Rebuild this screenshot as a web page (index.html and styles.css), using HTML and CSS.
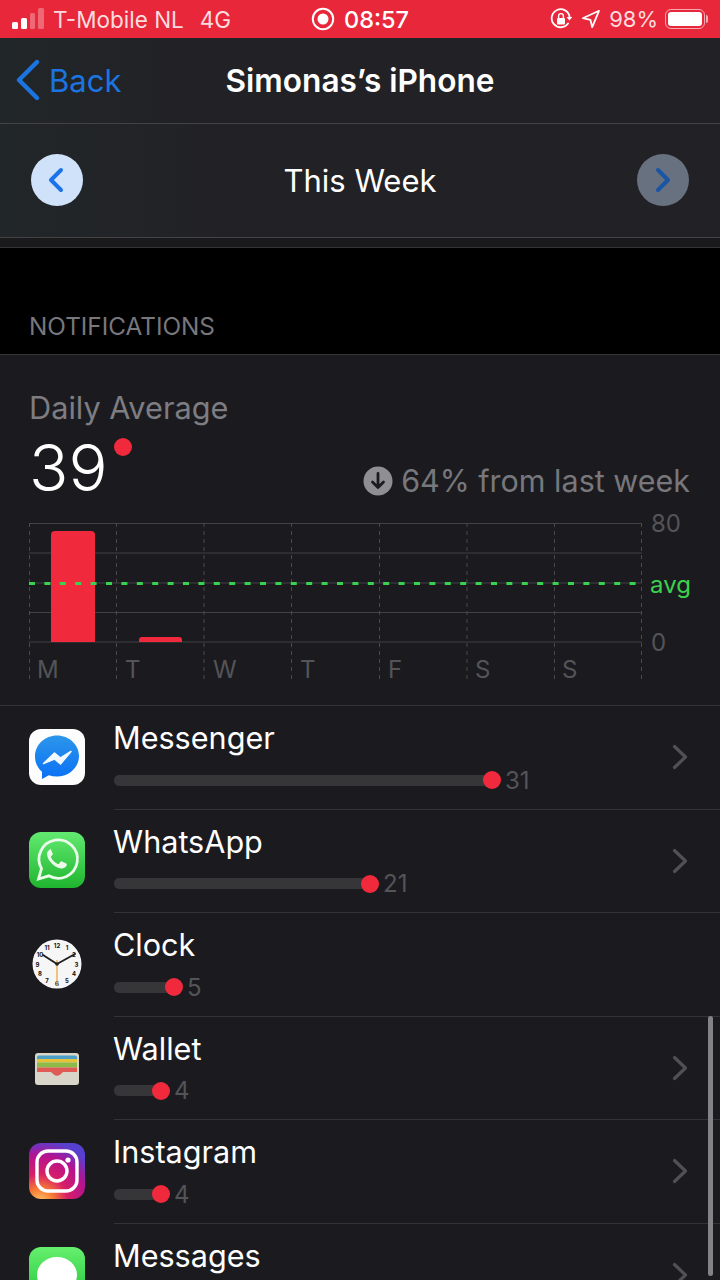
FILE: index.html
```html
<!DOCTYPE html>
<html lang="en">
<head>
<meta charset="UTF-8">
<title>Simonas's iPhone - Notifications</title>
<link rel="stylesheet" href="styles.css">
</head>
<body>
<div class="phone">
  <!-- status bar -->
  <div class="status">
    <div class="status-side">
      <svg class="signal" width="34" height="22" viewBox="0 0 34 22">
        <rect x="0" y="14" width="6" height="7" rx="1.5" fill="#fff"/>
        <rect x="9" y="10" width="6" height="11" rx="1.5" fill="#fff"/>
        <rect x="18" y="5" width="5" height="16" rx="1.5" fill="#fff" opacity=".3"/>
        <rect x="26" y="0" width="6" height="21" rx="1.5" fill="#fff" opacity=".3"/>
      </svg>
      <span class="carrier">T-Mobile NL</span>
      <span class="net">4G</span>
    </div>
    <div class="status-mid">
      <svg width="24" height="24" viewBox="0 0 24 24">
        <circle cx="12" cy="12" r="10.2" fill="none" stroke="#fff" stroke-width="2"/>
        <circle cx="12" cy="12" r="5.5" fill="#fff"/>
      </svg>
      <span class="clock-text">08:57</span>
    </div>
    <div class="status-side right">
      <svg width="22" height="22" viewBox="0 0 22 22">
        <path d="M18 15.5A9 9 0 1 1 19.6 9" fill="none" stroke="#fff" stroke-width="1.8" stroke-linecap="round"/>
        <path d="M16.6 9h5.6l-2.8 3.4z" fill="#fff"/>
        <rect x="7" y="10" width="8" height="6.5" rx="1" fill="#fff"/>
        <path d="M8.6 10V8a2.4 2.4 0 0 1 4.8 0v2" fill="none" stroke="#fff" stroke-width="1.4"/>
      </svg>
      <svg class="arrow" width="20" height="20" viewBox="0 0 20 20">
        <path d="M18 1.8 1.8 9.2l7.6 1.6 1.8 7.4z" fill="none" stroke="#fff" stroke-width="1.8" stroke-linejoin="round"/>
      </svg>
      <span class="batt-text">98%</span>
      <div class="battery"><div class="battery-fill"></div></div>
    </div>
  </div>

  <!-- nav -->
  <div class="nav">
    <div class="back">
      <svg width="26" height="42" viewBox="0 0 26 42">
        <path d="M22 3 4 21l18 18" fill="none" stroke="#1c74e0" stroke-width="4.4" stroke-linecap="round" stroke-linejoin="round"/>
      </svg>
      <span>Back</span>
    </div>
    <h1>Simonas’s iPhone</h1>
  </div>

  <!-- week picker -->
  <div class="week">
    <div class="round-btn prev">
      <svg width="18" height="26" viewBox="0 0 18 26"><path d="M13 3 3 13l10 10" fill="none" stroke="#1a73e8" stroke-width="4" stroke-linecap="round" stroke-linejoin="round"/></svg>
    </div>
    <div class="week-title">This Week</div>
    <div class="round-btn next">
      <svg width="18" height="26" viewBox="0 0 18 26"><path d="m4 3 10 10L4 23" fill="none" stroke="#1a54a5" stroke-width="4" stroke-linecap="round" stroke-linejoin="round"/></svg>
    </div>
  </div>
  <div class="strip"></div>

  <div class="section-label">NOTIFICATIONS</div>

  <!-- summary -->
  <div class="card">
    <div class="daily-label">Daily Average</div>
    <div class="daily-row">
      <div class="daily-num">39<span class="daily-dot"></span></div>
      <div class="change">
        <svg width="30" height="30" viewBox="0 0 30 30">
          <circle cx="15" cy="15" r="14.5" fill="#8e8e93"/>
          <path d="M15 7.5v14M9.5 16l5.500 5.500 5.500-5.500" fill="none" stroke="#1c1c1f" stroke-width="2.800" stroke-linecap="round" stroke-linejoin="round"/>
        </svg>
        <span>64% from last week</span>
      </div>
    </div>

    <!-- chart: lines, bars and labels sit at data positions -->
    <svg class="chart" width="720" height="190" viewBox="0 505 720 190">
      <g stroke="#434346" stroke-width="1.2">
        <path d="M29 523.500H642M29 553H642M29 583H642M29 612.500H642M29 642H642"/>
      </g>
      <g stroke="#4a4a4d" stroke-width="1" stroke-dasharray="4 4">
        <path d="M29.500 523V680M116.500 523V680M204 523V680M291.500 523V680M379.500 523V680M467 523V680M554.500 523V680M641.500 523V680"/>
      </g>
      <path d="M51 642V535a4 4 0 0 1 4-4h36a4 4 0 0 1 4 4v107z" fill="#f02a3c"/>
      <path d="M139 642v-2a3 3 0 0 1 3-3h37a3 3 0 0 1 3 3v2z" fill="#f02a3c"/>
      <path d="M29 583.500H636" stroke="#3ad050" stroke-width="3" stroke-dasharray="6 9.400"/>
      <g class="axis">
        <text x="651" y="532">80</text>
        <text x="651" y="651">0</text>
        <text x="650" y="593" class="axis-avg">avg</text>
        <text x="37" y="678">M</text>
        <text x="125" y="678">T</text>
        <text x="213" y="678">W</text>
        <text x="300" y="678">T</text>
        <text x="388" y="678">F</text>
        <text x="475" y="678">S</text>
        <text x="562" y="678">S</text>
      </g>
    </svg>
  </div>

  <!-- app list -->
  <div class="list">
    <div class="row">
      <div class="app-icon">
        <svg width="56" height="56" viewBox="0 0 56 56">
          <defs><linearGradient id="ms" x1="0" y1="0" x2="0" y2="1"><stop offset="0" stop-color="#2c96ea"/><stop offset="1" stop-color="#0a70f5"/></linearGradient></defs>
          <rect width="56" height="56" rx="12" fill="#fdfdfd"/>
          <path d="M28 6.500C16 6.500 6 15.500 6 27.500c0 6.200 2.600 11.500 7 15.200v7.300l6.800-3.700c2.500.8 5.200 1.200 8.200 1.200 12 0 22-9 22-20.500S40 6.500 28 6.500z" fill="url(#ms)"/>
          <path d="M14.500 34.500 25.500 24l6 5L42 22.500 31.500 35l-6-5z" fill="#f2f8ff" stroke="#f2f8ff" stroke-width="1.500" stroke-linejoin="round"/>
        </svg>
      </div>
      <div class="app-body">
        <div class="app-name">Messenger</div>
        <div class="usage"><div class="track" style="width:378px"></div><span class="count">31</span></div>
      </div>
      <svg class="chev" width="16" height="26" viewBox="0 0 16 26"><path d="m2.500 2.500 11 10.500-11 10.500" fill="none" stroke="#515155" stroke-width="3.200" stroke-linecap="round" stroke-linejoin="round"/></svg>
    </div>

    <div class="row">
      <div class="app-icon">
        <svg width="56" height="56" viewBox="0 0 56 56">
          <defs><linearGradient id="wa" x1="0" y1="0" x2="0" y2="1"><stop offset="0" stop-color="#62ea70"/><stop offset="1" stop-color="#1fb52f"/></linearGradient></defs>
          <rect width="56" height="56" rx="12" fill="url(#wa)"/>
          <path d="M9.500 47l3-10.500a19.200 19.200 0 1 1 7.300 7.300z" fill="none" stroke="#eafbe9" stroke-width="2.800"/>
          <path d="M21 17.500c-1.500.6-3.200 2.600-3 5 .3 3.500 2.500 7 5.500 9.800 3 2.800 6.800 4.500 9.800 4.200 2.300-.2 4-1.800 4.500-3.400.2-.6 0-1.200-.5-1.500l-4.300-2.200c-.6-.3-1.100-.1-1.500.4l-1.500 1.900c-.3.400-.8.400-1.200.2-3.200-1.400-5.300-3.600-6.800-6.400-.2-.4-.1-.9.200-1.200l1.300-1.500c.4-.4.400-.9.200-1.400l-1.800-4c-.3-.6-.6-.8-.9-.7z" fill="#eafbe9"/>
        </svg>
      </div>
      <div class="app-body">
        <div class="app-name">WhatsApp</div>
        <div class="usage"><div class="track" style="width:256px"></div><span class="count">21</span></div>
      </div>
      <svg class="chev" width="16" height="26" viewBox="0 0 16 26"><path d="m2.500 2.500 11 10.500-11 10.500" fill="none" stroke="#515155" stroke-width="3.200" stroke-linecap="round" stroke-linejoin="round"/></svg>
    </div>

    <div class="row">
      <div class="app-icon">
        <svg width="56" height="56" viewBox="0 0 56 56">
          <circle cx="28" cy="28" r="24.500" fill="#f6f6f6"/>
          <g class="clock-nums">
            <text x="28" y="11.500">12</text><text x="38" y="14">1</text><text x="45" y="21">2</text>
            <text x="47.500" y="30.500">3</text><text x="45" y="40">4</text><text x="38" y="47">5</text>
            <text x="28" y="50">6</text><text x="18" y="47">7</text><text x="11" y="40">8</text>
            <text x="8.500" y="30.500">9</text><text x="11" y="21">10</text><text x="18" y="14">11</text>
          </g>
          <path d="M28 28 14 19M28 28l18-10" stroke="#222" stroke-width="2" stroke-linecap="round"/>
          <path d="M28 24v26" stroke="#e8a33a" stroke-width="1.200"/>
          <circle cx="28" cy="28" r="1.800" fill="#222"/>
        </svg>
      </div>
      <div class="app-body">
        <div class="app-name">Clock</div>
        <div class="usage"><div class="track" style="width:60px"></div><span class="count">5</span></div>
      </div>
    </div>

    <div class="row">
      <div class="app-icon">
        <svg width="56" height="56" viewBox="0 0 56 56">
          <rect x="6" y="13" width="44" height="32" rx="3" fill="#d9d5c9"/>
          <path d="M8 17.500a2 2 0 0 1 2-2h36a2 2 0 0 1 2 2V19H8z" fill="#4d9fc7"/>
          <rect x="8" y="19" width="40" height="3.500" fill="#e6c23a"/>
          <rect x="8" y="22.500" width="40" height="5" fill="#8dbb4a"/>
          <path d="M8 27.500h40V32H34l-3 2.800c-2 1.400-4 1.400-6 0L22 32H8z" fill="#de5c55"/>
        </svg>
      </div>
      <div class="app-body">
        <div class="app-name">Wallet</div>
        <div class="usage"><div class="track" style="width:47px"></div><span class="count">4</span></div>
      </div>
      <svg class="chev" width="16" height="26" viewBox="0 0 16 26"><path d="m2.500 2.500 11 10.500-11 10.500" fill="none" stroke="#515155" stroke-width="3.200" stroke-linecap="round" stroke-linejoin="round"/></svg>
    </div>

    <div class="row">
      <div class="app-icon">
        <svg width="56" height="56" viewBox="0 0 56 56">
          <defs>
            <radialGradient id="ig" cx=".2" cy="1.050" r="1.100">
              <stop offset="0" stop-color="#fdc468"/><stop offset=".22" stop-color="#f77a35"/>
              <stop offset=".45" stop-color="#d81f66"/><stop offset=".75" stop-color="#b5128f"/><stop offset="1" stop-color="#5640d0"/>
            </radialGradient>
          </defs>
          <rect width="56" height="56" rx="12" fill="url(#ig)"/>
          <rect x="8" y="8" width="40" height="40" rx="11" fill="none" stroke="#fff" stroke-width="3.400"/>
          <circle cx="28" cy="28" r="10" fill="none" stroke="#fff" stroke-width="3.400"/>
          <circle cx="39" cy="17" r="2.600" fill="#fff"/>
        </svg>
      </div>
      <div class="app-body">
        <div class="app-name">Instagram</div>
        <div class="usage"><div class="track" style="width:47px"></div><span class="count">4</span></div>
      </div>
      <svg class="chev" width="16" height="26" viewBox="0 0 16 26"><path d="m2.500 2.500 11 10.500-11 10.500" fill="none" stroke="#515155" stroke-width="3.200" stroke-linecap="round" stroke-linejoin="round"/></svg>
    </div>

    <div class="row">
      <div class="app-icon">
        <svg width="56" height="56" viewBox="0 0 56 56">
          <defs><linearGradient id="mg" x1="0" y1="0" x2="0" y2="1"><stop offset="0" stop-color="#66f06e"/><stop offset="1" stop-color="#1fc23a"/></linearGradient></defs>
          <rect width="56" height="56" rx="12" fill="url(#mg)"/>
          <ellipse cx="28" cy="28" rx="20" ry="18" fill="#fff"/>
        </svg>
      </div>
      <div class="app-body">
        <div class="app-name">Messages</div>
      </div>
      <svg class="chev" width="16" height="26" viewBox="0 0 16 26"><path d="m2.500 2.500 11 10.500-11 10.500" fill="none" stroke="#515155" stroke-width="3.200" stroke-linecap="round" stroke-linejoin="round"/></svg>
    </div>
  </div>

  <!-- scroll indicator -->
  <div class="scrollbar"></div>
</div>
</body>
</html>
```

FILE: styles.css
```css
/* whole page: dark phone screen, no scrolling */
html, body {
  margin: 0;
  padding: 0;
  background: #000;
}
body {
  font-family: Inter, "Noto Sans", sans-serif;
  color: #fff;
}
.phone {
  position: relative;
  width: 720px;
  height: 1280px;
  overflow: hidden;
  background: #1b1b1f;
}

/* red status bar */
.status {
  height: 38px;
  background: #e8283a;
  display: flex;
  align-items: center;
  font-size: 22.5px;
  color: #fbdcdf;
}
.status-side {
  flex: 1 1 0;
  display: flex;
  align-items: center;
}
.status-side.right {
  justify-content: flex-end;
}
.signal {
  margin-left: 12px;
  margin-right: 7px;
}
.net {
  margin-left: 16px;
}
.status-mid {
  display: flex;
  align-items: center;
  gap: 9px;
  color: #fff;
  font-size: 23.5px;
}
.clock-text {
  font-weight: 500;
}
.arrow {
  margin-left: 9px;
  margin-right: 8px;
}
.batt-text {
  font-size: 22px;
}
.battery {
  position: relative;
  width: 40px;
  height: 20px;
  margin-left: 7px;
  margin-right: 15px;
  padding: 2px;
  box-sizing: border-box;
  border: 1px solid #f6a9b0;
  border-radius: 6px;
}
.battery::after {
  content: "";
  position: absolute;
  right: -4px;
  top: 5px;
  width: 2px;
  height: 8px;
  border-radius: 0 2px 2px 0;
  background: #f6a9b0;
}
.battery-fill {
  width: 34px;
  height: 14px;
  background: #fff;
  border-radius: 3px;
}

/* navigation bar */
.nav {
  height: 85px;
  border-bottom: 1px solid #434346;
  background: linear-gradient(90deg, #212629, #222226 25%);
  display: flex;
  align-items: center;
  justify-content: center;
  position: relative;
}
.nav h1 {
  margin: 0;
  font-size: 31.6px;
  font-weight: 600;
}
.back {
  position: absolute;
  left: 15px;
  top: 21px;
  display: flex;
  align-items: center;
  gap: 8px;
  font-size: 31px;
  color: #1c74e0;
}

/* week picker */
.week {
  height: 113px;
  border-bottom: 1px solid #434346;
  background: linear-gradient(90deg, #212629, #222226 30%);
  display: flex;
  align-items: center;
  justify-content: space-between;
  padding: 0 31px;
}
.round-btn {
  width: 52px;
  height: 52px;
  margin-top: -2px;
  border-radius: 50%;
  display: flex;
  align-items: center;
  justify-content: center;
}
.prev {
  background: #cfe2fa;
}
.next {
  background: #67717f;
}
.week-title {
  font-size: 31px;
}
.strip {
  height: 9px;
  background: #1a1a1d;
  border-bottom: 1px solid #333336;
}

.section-label {
  height: 107px;
  box-sizing: border-box;
  background: #000;
  border-bottom: 1px solid #333336;
  padding: 63px 0 0 29px;
  font-size: 24.3px;
  color: #77777c;
}

/* daily average card */
.card {
  height: 351px;
  box-sizing: border-box;
  padding-top: 34px;
  border-bottom: 1px solid #333336;
}
.daily-label {
  margin-left: 29px;
  font-size: 30.7px;
  line-height: 38px;
  color: #7d7d82;
}
.daily-row {
  display: flex;
  justify-content: space-between;
  align-items: flex-end;
  margin: 10px 30px 0 29px;
  height: 62px;
}
.daily-num {
  font-size: 65px;
  font-weight: 300;
  line-height: 62px;
  position: relative;
}
.daily-dot {
  position: absolute;
  top: 1px;
  left: 85px;
  width: 18px;
  height: 18px;
  border-radius: 50%;
  background: #f02a3c;
}
.change {
  display: flex;
  align-items: center;
  gap: 8px;
  font-size: 30.5px;
  color: #77777c;
}
.chart {
  display: block;
  margin-top: 6px;
}
.axis text {
  font-size: 24px;
  fill: #545458;
}
.axis .axis-avg {
  fill: #3bd24f;
}

/* app rows */
.row {
  height: 103.6px;
  display: flex;
  align-items: center;
  padding-left: 29px;
  position: relative;
}
.app-icon {
  width: 56px;
  height: 56px;
  margin-top: -2px;
  flex: none;
}
.app-icon svg {
  display: block;
}
.clock-nums text {
  font-size: 6px;
  font-weight: 700;
  fill: #111;
  text-anchor: middle;
}
.app-body {
  flex: 1;
  margin-left: 29px;
  align-self: stretch;
  border-bottom: 1px solid #333336;
  box-sizing: border-box;
  padding-top: 12px;
}
.app-name {
  font-size: 30.6px;
  line-height: 40px;
  margin-left: -1px;
}
.usage {
  display: flex;
  align-items: center;
  margin-top: 10px;
  height: 24px;
}
.track {
  position: relative;
  height: 11px;
  background: #363639;
  border-radius: 5px;
}
.track::after {
  content: "";
  position: absolute;
  right: -9px;
  top: -3.500px;
  width: 18px;
  height: 18px;
  border-radius: 50%;
  background: #f02a3c;
}
.count {
  margin-left: 13px;
  font-size: 24px;
  color: #545458;
}
.chev {
  position: absolute;
  right: 32px;
  top: 38px;
}
.scrollbar {
  position: absolute;
  left: 708px;
  top: 1016px;
  width: 5px;
  height: 260px;
  border-radius: 3px;
  background: #828287;
}
```
